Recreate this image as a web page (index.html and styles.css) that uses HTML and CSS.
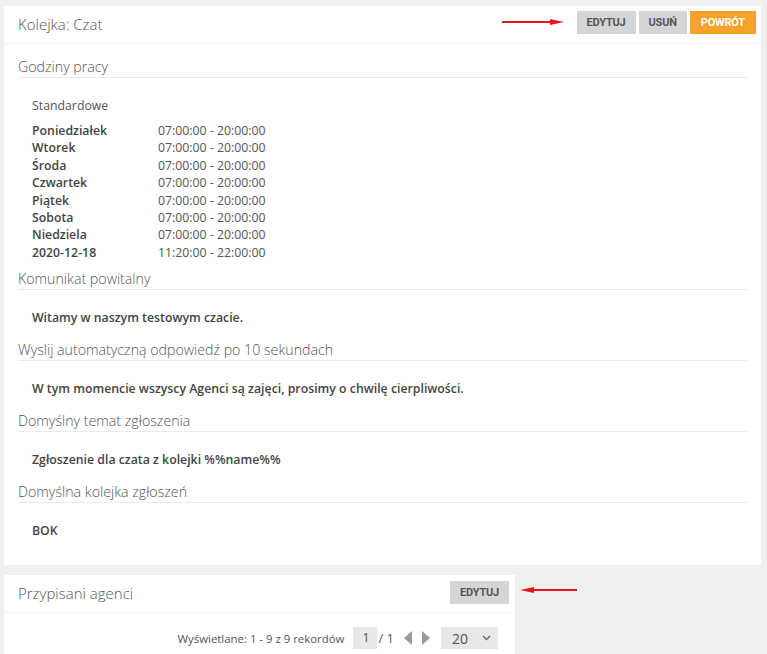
FILE: index.html
```html
<!DOCTYPE html>
<html lang="pl">
<head>
    <meta charset="UTF-8">
    <meta name="viewport" content="width=device-width, initial-scale=1.0">
    <title>Kolejka: Czat</title>
    <link rel="stylesheet" href="styles.css">
</head>
<body>

<div class="page">
    <section class="panel">
        <div class="panel-head">
            <h2 class="panel-title">Kolejka: Czat</h2>
            <div class="actions">
                <svg class="arrow" width="62" height="8" viewBox="0 0 62 8">
                    <line x1="0" y1="4" x2="52" y2="4" stroke="#e8121b" stroke-width="2"/>
                    <polygon points="48,1 62,4 48,7" fill="#e8121b"/>
                </svg>
                <a class="btn" href="#">EDYTUJ</a>
                <a class="btn" href="#">USUŃ</a>
                <a class="btn btn-orange" href="#">POWRÓT</a>
            </div>
        </div>

        <div class="panel-body">
            <h3 class="section-title">Godziny pracy</h3>
            <div class="hours">
                <p class="hours-label">Standardowe</p>
                <dl class="hours-list">
                    <dt>Poniedziałek</dt><dd>07:00:00 - 20:00:00</dd>
                    <dt>Wtorek</dt><dd>07:00:00 - 20:00:00</dd>
                    <dt>Środa</dt><dd>07:00:00 - 20:00:00</dd>
                    <dt>Czwartek</dt><dd>07:00:00 - 20:00:00</dd>
                    <dt>Piątek</dt><dd>07:00:00 - 20:00:00</dd>
                    <dt>Sobota</dt><dd>07:00:00 - 20:00:00</dd>
                    <dt>Niedziela</dt><dd>07:00:00 - 20:00:00</dd>
                    <dt>2020-12-18</dt><dd>11:20:00 - 22:00:00</dd>
                </dl>
            </div>

            <h3 class="section-title">Komunikat powitalny</h3>
            <p class="value">Witamy w naszym testowym czacie.</p>

            <h3 class="section-title">Wyslij automatyczną odpowiedź po 10 sekundach</h3>
            <p class="value">W tym momencie wszyscy Agenci są zajęci, prosimy o chwilę cierpliwości.</p>

            <h3 class="section-title">Domyślny temat zgłoszenia</h3>
            <p class="value">Zgłoszenie dla czata z kolejki %%name%%</p>

            <h3 class="section-title">Domyślna kolejka zgłoszeń</h3>
            <p class="value">BOK</p>
        </div>
    </section>

    <section class="panel panel-agents">
        <div class="panel-head">
            <h2 class="panel-title">Przypisani agenci</h2>
            <div class="actions">
                <a class="btn" href="#">EDYTUJ</a>
            </div>
            <svg class="arrow arrow-side" width="57" height="8" viewBox="0 0 57 8">
                <line x1="10" y1="4" x2="57" y2="4" stroke="#e8121b" stroke-width="2"/>
                <polygon points="14,1 0,4 14,7" fill="#e8121b"/>
            </svg>
        </div>

        <div class="pager">
            <span class="pager-info">Wyświetlane: 1 - 9 z 9 rekordów</span>
            <span class="pager-page">1</span>
            <span class="pager-total">/ 1</span>
            <span class="pager-prev"></span>
            <span class="pager-next"></span>
            <span class="pager-size">
                20
                <svg width="9" height="6" viewBox="0 0 9 6">
                    <polyline points="1,1 4.5,4.5 8,1" fill="none" stroke="#666" stroke-width="1.3"/>
                </svg>
            </span>
        </div>
    </section>
</div>

</body>
</html>
```

FILE: styles.css
```css
body {
    font-family: 'Open Sans', 'DejaVu Sans', sans-serif;
    font-size: 12.3px;
    background-color: #eef0f0;
    color: #555;
    margin: 0;
    padding: 0;
}
.page {
    padding: 6px 6px 0 4px;
}
.panel {
    background-color: #fff;
}
.panel-head {
    position: relative;
    display: flex;
    justify-content: space-between;
    height: 37px;
    padding: 0 5px 0 14px;
    border-bottom: 1px solid #f3f4f4;
}
.panel-title {
    margin: 0;
    font-size: 15px;
    font-weight: 300;
    line-height: 37px;
    color: #555;
}
.actions {
    display: flex;
    align-items: center;
    align-self: flex-start;
    gap: 3px;
    padding-top: 5px;
}
.arrow {
    display: block;
    margin: 0 10px 2px 0;
}
.btn {
    display: block;
    height: 23px;
    line-height: 23px;
    padding: 0 10px;
    background-color: #d3d5d7;
    color: #555;
    font-family: Roboto, 'Liberation Sans', sans-serif;
    font-size: 11px;
    font-weight: 700;
    letter-spacing: -0.2px;
    text-decoration: none;
}
.btn-orange {
    background-color: #f6a12a;
    color: #fff;
    padding: 0 11px;
}
.panel-body {
    padding: 13px 13px 12px 14px;
}
.section-title {
    margin: 0;
    font-size: 14.2px;
    font-weight: 300;
    line-height: 20px;
    color: #555;
    border-bottom: 1px solid #e9eaea;
}
.hours {
    padding: 19px 14px 8px;
}
.hours-label {
    margin: 0 0 7px;
    line-height: 18px;
}
.hours-list {
    display: grid;
    grid-template-columns: 126px 1fr;
    margin: 0;
    line-height: 17.4px;
}
.hours-list dt {
    font-weight: 600;
    color: #444;
}
.hours-list dd {
    margin: 0;
}
.value {
    margin: 0;
    padding: 19px 14px 13px;
    line-height: 18px;
    font-weight: 600;
    color: #444;
}
.panel-agents {
    width: 511px;
    margin-top: 10px;
    padding-bottom: 10px;
}
.panel-agents .panel-head {
    padding-right: 6px;
}
.panel-agents .actions {
    padding-top: 6px;
}
.arrow-side {
    position: absolute;
    left: calc(100% + 5px);
    top: 11px;
    margin: 0;
}
.pager {
    display: flex;
    justify-content: flex-end;
    align-items: center;
    padding: 14px 17px 0 0;
}
.pager-info {
    margin-right: 9px;
    font-size: 11.4px;
}
.pager-page {
    width: 24px;
    height: 22px;
    line-height: 22px;
    padding-right: 8px;
    box-sizing: border-box;
    text-align: right;
    background-color: #e6e8e9;
}
.pager-total {
    margin: 0 10px 0 1px;
    font-size: 13px;
}
.pager-prev, .pager-next {
    width: 0;
    height: 0;
    border-top: 7px solid transparent;
    border-bottom: 7px solid transparent;
}
.pager-prev {
    border-right: 8px solid #999;
    margin-right: 10px;
}
.pager-next {
    border-left: 8px solid #999;
    margin-right: 11px;
}
.pager-size {
    display: flex;
    align-items: center;
    justify-content: space-between;
    width: 57px;
    height: 22px;
    padding: 0 7px 0 11px;
    box-sizing: border-box;
    background-color: #e6e8e9;
    font-size: 14px;
}
```
